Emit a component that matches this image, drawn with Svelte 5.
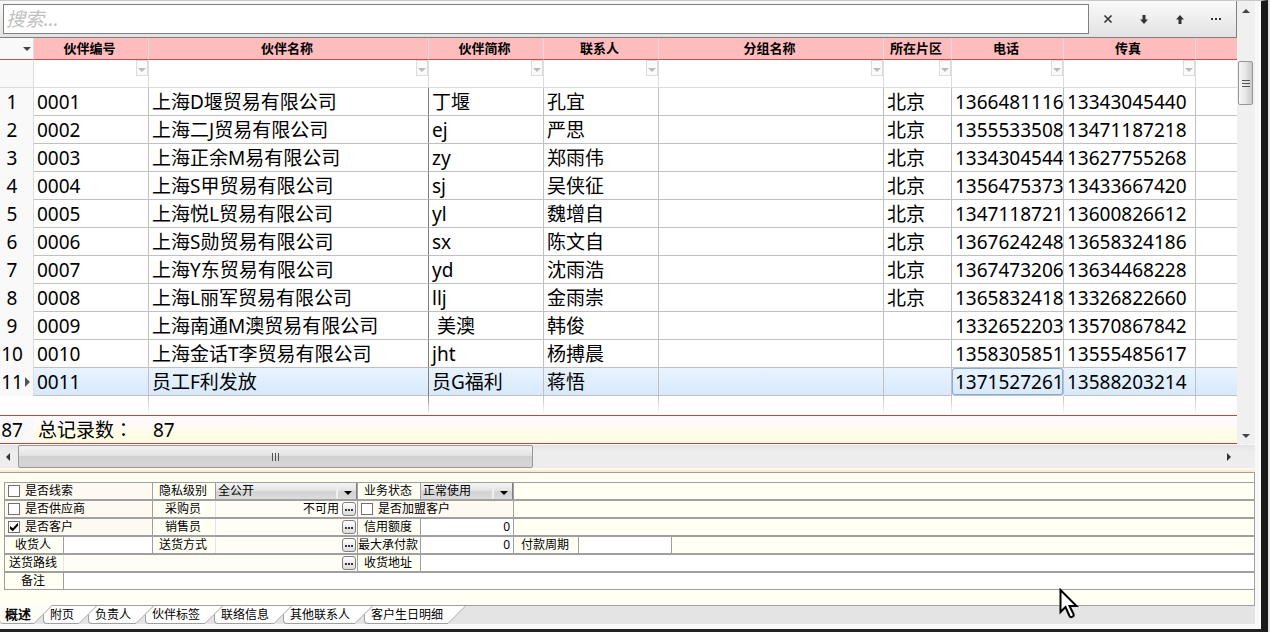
<script>
  const columns = [
    { key: 'code', title: '伙伴编号', width: 115 },
    { key: 'name', title: '伙伴名称', width: 280 },
    { key: 'short', title: '伙伴简称', width: 115 },
    { key: 'contact', title: '联系人', width: 115 },
    { key: 'group', title: '分组名称', width: 225 },
    { key: 'area', title: '所在片区', width: 68 },
    { key: 'phone', title: '电话', width: 112 },
    { key: 'fax', title: '传真', width: 132 },
  ];

  const partners = [
    { code: '0001', name: '上海D堰贸易有限公司', short: '丁堰', contact: '孔宜', area: '北京', phone: '1366481116', fax: '13343045440' },
    { code: '0002', name: '上海二J贸易有限公司', short: 'ej', contact: '严思', area: '北京', phone: '1355533508', fax: '13471187218' },
    { code: '0003', name: '上海正余M易有限公司', short: 'zy', contact: '郑雨伟', area: '北京', phone: '1334304544', fax: '13627755268' },
    { code: '0004', name: '上海S甲贸易有限公司', short: 'sj', contact: '吴侠征', area: '北京', phone: '1356475373', fax: '13433667420' },
    { code: '0005', name: '上海悦L贸易有限公司', short: 'yl', contact: '魏增自', area: '北京', phone: '1347118721', fax: '13600826612' },
    { code: '0006', name: '上海S勋贸易有限公司', short: 'sx', contact: '陈文自', area: '北京', phone: '1367624248', fax: '13658324186' },
    { code: '0007', name: '上海Y东贸易有限公司', short: 'yd', contact: '沈雨浩', area: '北京', phone: '1367473206', fax: '13634468228' },
    { code: '0008', name: '上海L丽军贸易有限公司', short: 'llj', contact: '金雨崇', area: '北京', phone: '1365832418', fax: '13326822660' },
    { code: '0009', name: '上海南通M澳贸易有限公司', short: ' 美澳', contact: '韩俊', area: '', phone: '1332652203', fax: '13570867842' },
    { code: '0010', name: '上海金话T李贸易有限公司', short: 'jht', contact: '杨搏晨', area: '', phone: '1358305851', fax: '13555485617' },
    { code: '0011', name: '员工F利发放', short: '员G福利', contact: '蒋悟', area: '', phone: '1371527261', fax: '13588203214' },
  ];

  const tabs = ['概述', '附页', '负责人', '伙伴标签', '联络信息', '其他联系人', '客户生日明细'];

  let selected = $state(10);
  let activeTab = $state(0);
  let search = $state('');
</script>

{#snippet lookup(id, value)}
  <input {id} type="text" {value} readonly />
  <button class="more" aria-label="选择">
    <svg width="8" height="2" viewBox="0 0 8 2"><path d="M0 0h2v2H0zM3 0h2v2H3zM6 0h2v2H6z" fill="#333" /></svg>
  </button>
{/snippet}

{#snippet caret()}
  <svg class="caret" width="8" height="4" viewBox="0 0 8 4"><path d="M0 0h8L4 4z" /></svg>
{/snippet}

<div class="window">
  <div class="top">
    <div class="main">
      <div class="toolbar">
        <input class="search" type="text" placeholder="搜索..." aria-label="搜索" bind:value={search} />
        <div class="tools">
          <button aria-label="清除" onclick={() => (search = '')}>
            <svg width="10" height="10" viewBox="0 0 10 10"><path d="M1.500 1.500l7 7M8.500 1.500l-7 7" fill="none" stroke="#333" stroke-width="1.600" /></svg>
          </button>
          <button aria-label="下一个">
            <svg width="8" height="9" viewBox="0 0 8 9"><path d="M2.500 0h3v4.500H8L4 9 0 4.500h2.500z" fill="#333" /></svg>
          </button>
          <button aria-label="上一个">
            <svg width="8" height="9" viewBox="0 0 8 9"><path d="M2.500 9h3V4.500H8L4 0 0 4.500h2.500z" fill="#333" /></svg>
          </button>
          <button aria-label="更多">
            <svg width="10" height="2" viewBox="0 0 10 2"><path d="M0 0h2v2H0zM4 0h2v2H4zM8 0h2v2H8z" fill="#333" /></svg>
          </button>
        </div>
      </div>

      <table>
        <colgroup>
          <col style="width: 34px" />
          {#each columns as col}
            <col style="width: {col.width}px" />
          {/each}
          <col />
        </colgroup>
        <thead>
          <tr class="titles">
            <th class="corner">
              <button aria-label="列设置">
                <svg width="8" height="4" viewBox="0 0 8 4"><path d="M0 0h8L4 4z" fill="#444" /></svg>
              </button>
            </th>
            {#each columns as col}
              <th scope="col">{col.title}</th>
            {/each}
            <th></th>
          </tr>
          <tr class="filters">
            <td class="num"></td>
            {#each columns as col}
              <td>
                <button aria-label="筛选{col.title}">
                  <svg width="8" height="4" viewBox="0 0 8 4"><path d="M0 0h8L4 4z" fill="#bbb" /></svg>
                </button>
              </td>
            {/each}
            <td></td>
          </tr>
        </thead>
        <tbody>
          {#each partners as row, i}
            <tr class:selected={i === selected} onclick={() => (selected = i)}>
              <td class="num">
                <div>
                  <span>{i + 1}</span>
                  {#if i === selected}
                    <svg width="5" height="10" viewBox="0 0 5 10"><path d="M0 0l5 5-5 5z" fill="#555" /></svg>
                  {/if}
                </div>
              </td>
              {#each columns as col}
                <td class={col.key}>{row[col.key] ?? ''}</td>
              {/each}
              <td></td>
            </tr>
          {/each}
          <tr class="filler">
            <td class="num"></td>
            {#each columns as col}
              <td class={col.key}></td>
            {/each}
            <td></td>
          </tr>
        </tbody>
        <tfoot>
          <tr>
            <td class="num"><div><span>87</span></div></td>
            <td>总记录数：</td>
            <td colspan="8">87</td>
          </tr>
        </tfoot>
      </table>
    </div>

    <div class="vscroll">
      <svg width="8" height="4" viewBox="0 0 8 4"><path d="M0 4h8L4 0z" fill="#444" /></svg>
      <div class="thumb">
        <svg width="8" height="9" viewBox="0 0 8 9"><path d="M0 1.500h8M0 4.500h8M0 7.500h8" stroke="#555" /></svg>
      </div>
      <svg class="down" width="8" height="4" viewBox="0 0 8 4"><path d="M0 0h8L4 4z" fill="#444" /></svg>
    </div>
  </div>

  <div class="hscroll">
    <svg width="4" height="8" viewBox="0 0 4 8"><path d="M4 0v8L0 4z" fill="#333" /></svg>
    <div class="thumb">
      <svg width="9" height="8" viewBox="0 0 9 8"><path d="M1.500 0v8M4.500 0v8M7.500 0v8" stroke="#555" /></svg>
    </div>
    <svg class="right" width="4" height="8" viewBox="0 0 4 8"><path d="M0 0v8l4-4z" fill="#333" /></svg>
  </div>

  <form class="panel" onsubmit={(e) => e.preventDefault()}>
    <div class="row">
      <label class="check wide"><input type="checkbox" />是否线索</label>
      <label class="label" for="privacy">隐私级别</label>
      <div class="combo field">
        <select id="privacy"><option>全公开</option></select>
        {@render caret()}
      </div>
      <label class="label" for="status">业务状态</label>
      <div class="combo small">
        <select id="status"><option>正常使用</option></select>
        {@render caret()}
      </div>
      <div class="rest"></div>
    </div>
    <div class="row">
      <label class="check wide"><input type="checkbox" />是否供应商</label>
      <label class="label" for="buyer">采购员</label>
      <div class="lookup field">{@render lookup('buyer', '不可用')}</div>
      <label class="check union"><input type="checkbox" />是否加盟客户</label>
      <div class="rest"></div>
    </div>
    <div class="row">
      <label class="check wide"><input type="checkbox" checked />是否客户</label>
      <label class="label" for="seller">销售员</label>
      <div class="lookup field">{@render lookup('seller', '')}</div>
      <label class="label" for="credit">信用额度</label>
      <div class="text small"><input id="credit" class="number" type="text" value="0" /></div>
      <div class="rest"></div>
    </div>
    <div class="row">
      <label class="label narrow" for="receiver">收货人</label>
      <div class="text receiver"><input id="receiver" type="text" /></div>
      <label class="label" for="delivery">送货方式</label>
      <div class="lookup field">{@render lookup('delivery', '')}</div>
      <label class="label" for="maxpay">最大承付款</label>
      <div class="text small"><input id="maxpay" class="number" type="text" value="0" /></div>
      <label class="label period" for="period">付款周期</label>
      <div class="text small"><input id="period" type="text" /></div>
      <div class="rest"></div>
    </div>
    <div class="row">
      <label class="label narrow" for="route">送货路线</label>
      <div class="lookup route">{@render lookup('route', '')}</div>
      <label class="label" for="address">收货地址</label>
      <div class="text grow"><input id="address" type="text" /></div>
    </div>
    <div class="row">
      <label class="label narrow" for="remark">备注</label>
      <div class="text grow"><input id="remark" type="text" /></div>
    </div>
  </form>

  <div class="tabs" role="tablist">
    {#each tabs as tab, i}
      <button role="tab" aria-selected={i === activeTab} class:active={i === activeTab} onclick={() => (activeTab = i)}>{tab}</button>
      <svg class="slope" class:active={i === activeTab} width="19" height="19" viewBox="0 0 19 19">
        <path d="M0 19V0h19z" />
        <path class="edge" d="M0 18.500L18.500 0" />
        {#if i !== activeTab}
          <path class="edge" d="M0 .5h19" />
        {/if}
      </svg>
    {/each}
  </div>

  <svg class="pointer" width="20" height="32" viewBox="0 0 20 32">
    <path d="M1.500 2v22l5-5 4 9c1 2 5 1 4-2l-4-8h7z" fill="#fff" stroke="#000" stroke-width="2" />
  </svg>
</div>

<style>
  :global(body) {
    background: #e0e0e0;
  }

  .window {
    position: relative;
    box-sizing: border-box;
    min-height: 100vh;
    margin-right: 2px;
    padding-right: 6px;
    padding-bottom: 5px;
    border-top: 1px solid #c8c8c8;
    border-right: 7px solid #191919;
    border-bottom: 3px solid #222;
    background: #f9f9f9;
    color: #000;
    font-family: 'Noto Sans', 'Noto Sans CJK SC', sans-serif;
    font-size: 12px;
  }

  button,
  input,
  select {
    box-sizing: border-box;
    margin: 0;
    padding: 0;
    border: none;
    border-radius: 0;
    outline: none;
    background: none;
    color: inherit;
    font: inherit;
  }

  svg {
    display: block;
    flex: none;
  }

  .top {
    display: flex;
  }

  .main {
    flex: 1;
    min-width: 0;
  }

  /* search bar */
  .toolbar {
    display: flex;
    gap: 1px;
    padding: 3px 2px 3px 3px;
    border-right: 1px solid #808080;
    border-bottom: 1px solid #808080;
    background: linear-gradient(#fafafa, #e2e2e2);
  }

  .search {
    flex: 1;
    min-width: 0;
    height: 30px;
    padding: 0 2px;
    border: 1px solid #808080;
    background: #fff;
    font-size: 19px;
  }

  .search::placeholder {
    color: #c0c0c0;
    font-style: italic;
  }

  .tools {
    display: flex;
  }

  .tools button {
    display: flex;
    align-items: center;
    justify-content: center;
    width: 36px;
  }

  /* grid */
  table {
    width: 100%;
    table-layout: fixed;
    border-spacing: 0;
    background: #fff;
  }

  th,
  td {
    box-sizing: border-box;
    padding: 0;
    overflow: hidden;
    white-space: pre;
  }

  .titles th {
    height: 22px;
    padding: 0 3px 2px 0;
    border-right: 1px solid #dcdcdc;
    border-bottom: 1px solid #c84c4c;
    background: #ffbcbc;
    font-size: 13px;
    line-height: 18px;
  }

  .titles .corner {
    padding: 0;
    background: #f9f9f9;
  }

  .titles th:last-child {
    border-right: none;
  }

  .corner button {
    display: block;
    margin-left: auto;
    padding: 4px 2px;
  }

  .filters td {
    height: 28px;
    border-right: 1px solid #dcdcdc;
    border-bottom: 1px solid #dcdcdc;
    vertical-align: top;
  }

  .filters td:last-child {
    border-right: none;
  }

  .filters button {
    display: flex;
    align-items: center;
    justify-content: center;
    width: 12px;
    height: 16px;
    margin-left: auto;
    padding-top: 3px;
    border: 1px solid #dcdcdc;
    background: #fafafa;
  }

  tbody td {
    height: 28px;
    padding: 2px 0 0 3px;
    border-right: 1px solid #c0c0c0;
    border-bottom: 1px solid #c0c0c0;
    font-size: 19px;
    line-height: 25px;
  }

  tbody td:last-child {
    border-right: none;
  }

  tbody td.name {
    border-right-color: #808080;
  }

  tbody td.num,
  .filters .num {
    padding: 0;
    border-right-color: #dcdcdc;
    background: #f9f9f9;
  }

  tbody td.num {
    border-bottom: none;
  }

  .num div {
    display: flex;
    align-items: center;
    gap: 1px;
  }

  .num span {
    width: 24px;
    text-align: center;
  }

  .selected td {
    background: linear-gradient(#e8f3ff, #d8e9fc);
  }

  .selected .phone {
    border-radius: 3px;
    box-shadow: inset 0 0 0 1px #84acdd;
  }

  .filler td {
    height: 19px;
    padding: 0;
    border: none;
    background: linear-gradient(#c0c0c0, #fff) right / 1px 100% no-repeat;
  }

  .filler td.name {
    background-image: linear-gradient(#808080, #fff);
  }

  .filler td.num {
    background-color: #fff;
  }

  .filler td:last-child {
    background: none;
  }

  tfoot td {
    height: 29px;
    padding: 2px 0 0 4px;
    border-top: 1px solid #c84040;
    border-bottom: 1px solid #c84040;
    background: linear-gradient(#fdfaff, #fffaf4 40%, #fffde6 60%, #fffde2);
    font-family: 'Noto Sans', 'Noto Sans CJK TC', sans-serif;
    font-size: 19px;
    line-height: 25px;
  }

  tfoot td.num {
    padding: 2px 0 0;
    background: #f9f9f9;
  }

  /* scroll bars */
  .vscroll {
    display: flex;
    flex-direction: column;
    align-items: center;
    box-sizing: border-box;
    width: 18px;
    padding: 8px 2px 6px 1px;
    background: #f0f0f0;
  }

  .vscroll .thumb {
    display: flex;
    align-items: center;
    justify-content: center;
    box-sizing: border-box;
    width: 15px;
    height: 44px;
    margin-top: 48px;
    border: 1px solid #979797;
    border-radius: 2px;
    background: linear-gradient(90deg, #f5f5f5, #e6e6e6 50%, #c8c8c8);
  }

  .vscroll .down {
    margin-top: auto;
  }

  .hscroll {
    display: flex;
    align-items: center;
    margin-top: 1px;
    padding: 0 24px 0 6px;
    background: linear-gradient(#e4e4e4, #ededed 30%);
  }

  .hscroll .thumb {
    display: flex;
    align-items: center;
    justify-content: center;
    box-sizing: border-box;
    width: 42%;
    height: 23px;
    margin-left: 8px;
    border: 1px solid #979797;
    border-radius: 2px;
    background: linear-gradient(#f2f2f2, #e4e4e4 45%, #d2d2d2 50%, #d6d6d6);
  }

  .hscroll .right {
    margin-left: auto;
  }

  /* detail form */
  .panel {
    margin-top: 4px;
    padding: 9px 0 15px 4px;
    border-top: 1px solid #a0a0a0;
    border-right: 1px solid #a0a0a0;
    background: #fffff4;
    box-shadow: 0 -2px #fdebc8;
  }

  .row {
    display: flex;
    height: 16px;
    border-top: 1px solid #a0a0a0;
    border-bottom: 1px solid #a0a0a0;
    line-height: 16px;
    white-space: nowrap;
  }

  .row > * {
    display: flex;
    align-items: center;
    box-sizing: border-box;
    flex: none;
    border-left: 1px solid #a0a0a0;
  }

  .row > .rest,
  .row > .grow {
    flex: 1;
  }

  .row input[type='text'] {
    flex: 1;
    min-width: 0;
    height: 16px;
    padding: 0 3px;
  }

  .row .number {
    text-align: right;
  }

  .label {
    justify-content: center;
    width: 63px;
    padding-right: 2px;
  }

  .narrow {
    width: 59px;
  }

  .period {
    width: 65px;
  }

  .wide {
    width: 148px;
  }

  .union {
    width: 156px;
  }

  .field {
    width: 142px;
  }

  .small {
    width: 93px;
  }

  .receiver {
    width: 89px;
  }

  .route {
    width: 294px;
  }

  .text {
    background: #fff;
  }

  .check {
    gap: 5px;
    padding-left: 3px;
    background: #fffaf1;
  }

  .check input {
    appearance: none;
    width: 12px;
    height: 12px;
    border: 1px solid #707070;
    background: #fff;
  }

  .check input:checked::after {
    content: '';
    display: block;
    height: 10px;
    background: #000;
    clip-path: polygon(10% 40%, 38% 62%, 90% 8%, 90% 38%, 38% 92%, 10% 70%);
  }

  .row > .lookup {
    padding-right: 1px;
    border-left-color: #e4e4ee;
    background: #fffdf6;
  }

  .lookup input {
    text-align: right;
  }

  .more {
    display: flex;
    align-items: flex-end;
    justify-content: center;
    width: 14px;
    height: 14px;
    padding-bottom: 4px;
    border: 1px solid #808080;
    border-radius: 3px;
    background: linear-gradient(#fff, #dcdcdc);
  }

  .combo {
    border-right: 1px solid #808080;
    background: linear-gradient(#f4f4f4, #e4e4e4 45%, #d2d2d2 55%, #dcdcdc);
  }

  .combo select {
    flex: 1;
    min-width: 0;
    height: 16px;
    margin-right: -18px;
    padding: 0 22px 0 2px;
    appearance: none;
    border-right: 18px solid transparent;
    box-shadow: inset -2px 0 #f0f0ea;
  }

  .caret {
    margin: 3px 4px 0 6px;
    pointer-events: none;
  }

  /* bottom tabs */
  .tabs {
    display: flex;
    box-sizing: border-box;
    height: 19px;
    background: linear-gradient(#a0a0a0, #a0a0a0) top / 100% 1px no-repeat #e4e4e4;
  }

  .tabs button {
    padding: 0 5px 0 6px;
    border: 1px solid #a0a0a0;
    border-right: none;
    border-radius: 0 0 0 4px;
    background: #fff;
    line-height: 16px;
  }

  .tabs .active {
    background: #fffcf6;
  }

  .tabs button.active {
    padding: 0 3px 0 5px;
    border-top: none;
    border-left: none;
    font-size: 13px;
    font-weight: bold;
  }

  .slope {
    position: relative;
    z-index: 1;
    margin-right: -10px;
    fill: #fff;
  }

  .tabs .slope.active {
    background: none;
    fill: #fffcf6;
  }

  .slope .edge {
    fill: none;
    stroke: #a0a0a0;
  }

  /* mouse pointer floating over the panel */
  .pointer {
    position: absolute;
    top: 587px;
    left: 1059px;
  }
</style>
